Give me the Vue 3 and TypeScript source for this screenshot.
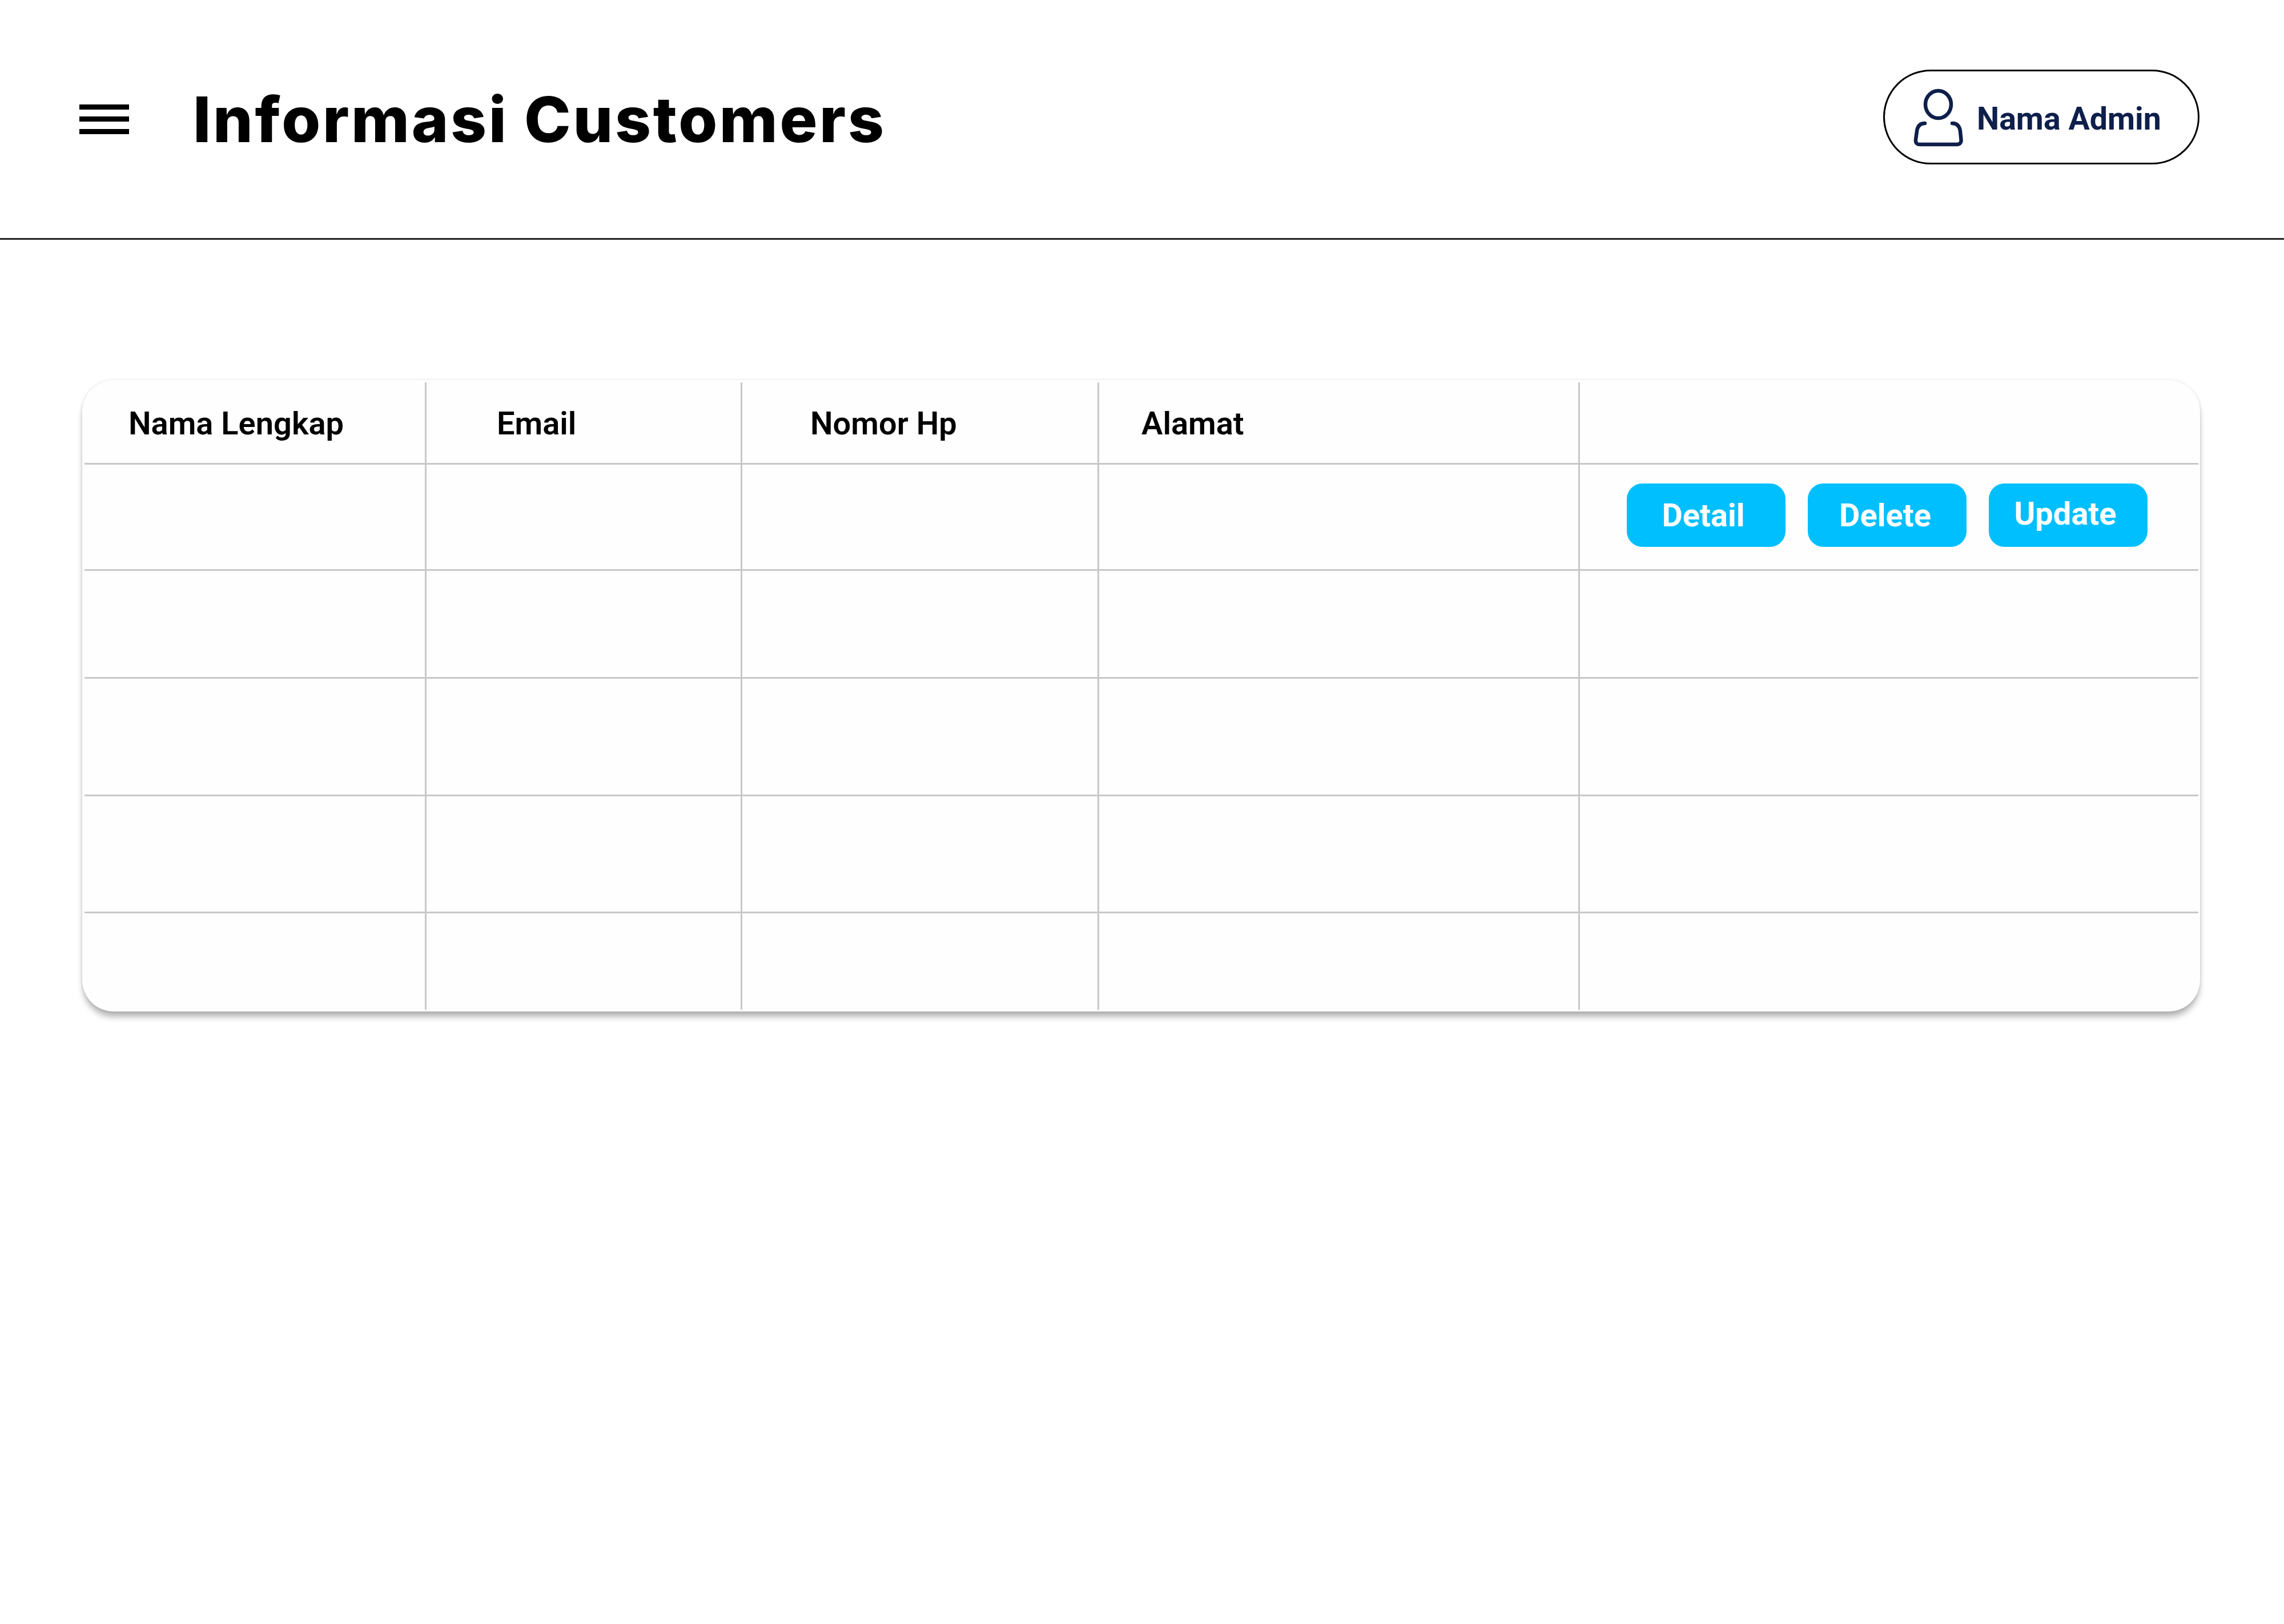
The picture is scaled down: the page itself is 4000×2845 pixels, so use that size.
<template>
  <div class="page">
    <header class="topbar">
      <div class="menu-icon">
        <span></span>
        <span></span>
        <span></span>
      </div>
      <h1 class="title">Informasi Customers</h1>
      <div class="admin-pill">
        <svg class="admin-icon" width="92" height="104" viewBox="0 0 92 104" fill="none" stroke="#0f1f4b" stroke-width="6.5" stroke-linecap="round" stroke-linejoin="round">
          <ellipse cx="44.5" cy="29" rx="22.5" ry="24" />
          <path d="M21 62C12 62 8 68 7 76L5 91C4.5 97 8 99 12 99H77C81 99 85 97 84.5 91L83 76C82 68 78 62 69 62" />
        </svg>
        <span class="admin-name">Nama Admin</span>
      </div>
    </header>

    <section class="card">
      <div class="grid">
        <div v-for="col in columns" :key="col.label" class="cell head" :class="col.cls">{{ col.label }}</div>
        <template v-for="row in rows" :key="row">
          <div v-for="n in 4" :key="n" class="cell"></div>
          <div class="cell actions">
            <template v-if="row === 1">
              <button v-for="b in actions" :key="b" class="action-btn" :class="'btn-' + b.toLowerCase()">{{ b }}</button>
            </template>
          </div>
        </template>
      </div>
    </section>
  </div>
</template>

<script setup lang="ts">
const columns = [
  { label: 'Nama Lengkap', cls: 'col-nama' },
  { label: 'Email', cls: 'col-email' },
  { label: 'Nomor Hp', cls: 'col-nomor' },
  { label: 'Alamat', cls: 'col-alamat' },
  { label: '', cls: 'col-aksi' }
]

const rows = [1, 2, 3, 4, 5]
const actions = ['Detail', 'Delete', 'Update']
</script>

<style>
html,
body {
  background: #fff;
}
</style>

<style scoped>
.page {
  min-height: 2845px;
  background: #fff;
  font-family: Roboto, "Liberation Sans", sans-serif;
  overflow: hidden;
}

.topbar {
  height: 417px;
  box-sizing: content-box;
  padding: 0 148px 0 139px;
  border-bottom: 3px solid #222;
  display: flex;
  align-items: center;
}

.menu-icon {
  width: 87px;
  display: flex;
  flex-direction: column;
  gap: 12.5px;
}

.menu-icon span {
  display: block;
  height: 9px;
  background: #000;
}

.title {
  margin: 0 0 0 112px;
  font-family: Inter, "Liberation Sans", sans-serif;
  font-size: 110px;
  font-weight: 800;
  letter-spacing: 3.6px;
  color: #000;
  flex: 1;
}

.admin-pill {
  width: 554px;
  height: 166px;
  box-sizing: border-box;
  margin-bottom: 8px;
  border: 3px solid #000;
  border-radius: 83px;
  padding-left: 49px;
  display: flex;
  align-items: center;
  gap: 20px;
}

.admin-icon {
  margin-top: 2px;
}

.admin-name {
  margin-top: 7px;
  font-size: 55.5px;
  font-weight: 700;
  color: #0f1f4b;
}

.card {
  margin: 246px 147px 0 144px;
  height: 1106px;
  box-sizing: border-box;
  padding: 4px 3px 3px 4px;
  background: #fefefe;
  border-radius: 55px;
  box-shadow: 0 11px 12px -2px rgba(0, 0, 0, 0.3), 0 0 5px rgba(0, 0, 0, 0.12);
}

.grid {
  display: grid;
  grid-template-columns: 599px 553px 625px 842px 1fr;
  grid-template-rows: 144px 186px 189px 206px 205px 169px;
}

.cell {
  box-sizing: border-box;
  border-right: 3px solid #c8c8c8;
  border-bottom: 3px solid #c8c8c8;
}

.cell:nth-child(5n) {
  border-right: none;
}

.cell:nth-last-child(-n + 5) {
  border-bottom: none;
}

.head {
  display: flex;
  align-items: center;
  padding-top: 2px;
  font-size: 56px;
  font-weight: 600;
  color: #000;
}

.col-nama {
  padding-left: 77px;
}

.col-email {
  padding-left: 123px;
}

.col-nomor {
  padding-left: 119px;
}

.col-alamat {
  padding-left: 74px;
}

.actions {
  padding: 33px 0 0 82px;
  display: flex;
  align-items: flex-start;
  gap: 39px;
}

.action-btn {
  width: 278px;
  height: 111px;
  border: none;
  border-radius: 27px;
  background: #00bfff;
  color: #fff;
  font-family: Roboto, "Liberation Sans", sans-serif;
  font-size: 56px;
  font-weight: 700;
  padding: 0 10px 0 0;
}

.btn-delete {
  padding-right: 7px;
}

.btn-update {
  padding-bottom: 5px;
}
</style>
